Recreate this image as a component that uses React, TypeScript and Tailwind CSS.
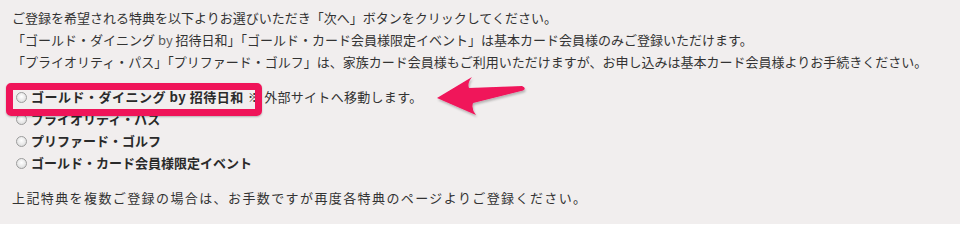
import React from "react";

function Radio() {
  return (
    <span className="inline-block w-[11px] h-[11px] shrink-0 rounded-full border border-[#9c9c9c] bg-[radial-gradient(circle_at_50%_40%,#ffffff_0%,#e6e6e6_60%,#cfcfcf_100%)]" />
  );
}

export default function App() {
  return (
    <div
      className="w-[960px] h-[224px] bg-[#f1eeee] text-[#333333] text-[13px] pl-[12px] pt-[7px] overflow-hidden relative"
      style={{ fontFamily: '"Noto Sans CJK JP", "Noto Sans", sans-serif' }}
    >
      <div className="leading-[22px] whitespace-nowrap">
        <p>ご登録を希望される特典を以下よりお選びいただき「次へ」ボタンをクリックしてください。</p>
        <p>
          「ゴールド・ダイニング <span className="text-[#5a5a5a]">by</span> 招待日和」「ゴールド・カード会員様限定イベント」は基本カード会員様のみご登録いただけます。
        </p>
        <p>「プライオリティ・パス」「プリファード・ゴルフ」は、家族カード会員様もご利用いただけますが、お申し込みは基本カード会員様よりお手続きください。</p>
      </div>

      <div className="relative mt-[13px] leading-[22px] whitespace-nowrap">
        <div className="flex items-center h-[22px] pl-[4px] gap-[4px]">
          <Radio />
          <span className="font-bold text-[#2a2a2a] tracking-[0.5px]">ゴールド・ダイニング by 招待日和</span>
          <span className="tracking-[0.3px]">※ 外部サイトへ移動します。</span>
        </div>
        <div className="flex items-center h-[22px] pl-[4px] gap-[4px]">
          <Radio />
          <span className="font-bold text-[#2a2a2a]">プライオリティ・パス</span>
        </div>
        <div className="flex items-center h-[22px] pl-[4px] gap-[4px]">
          <Radio />
          <span className="font-bold text-[#2a2a2a]">プリファード・ゴルフ</span>
        </div>
        <div className="flex items-center h-[22px] pl-[4px] gap-[4px]">
          <Radio />
          <span className="font-bold text-[#2a2a2a]">ゴールド・カード会員様限定イベント</span>
        </div>

        <div className="absolute top-[-3px] left-[-6px] w-[256px] h-[33px] border-[7px] border-[#ef1459] rounded-[5px] shadow-[0_1px_2px_rgba(0,0,0,0.25)] pointer-events-none" />
      </div>

      <p className="mt-[13px] leading-[22px] whitespace-nowrap tracking-[1.4px]">
        上記特典を複数ご登録の場合は、お手数ですが再度各特典のページよりご登録ください。
      </p>

      <svg
        className="absolute left-0 top-0 pointer-events-none"
        width="960"
        height="224"
        viewBox="0 0 960 224"
      >
        <defs>
          <filter id="sh" x="-20%" y="-30%" width="140%" height="160%">
            <feDropShadow dx="1" dy="2" stdDeviation="1.2" floodColor="#000" floodOpacity="0.25" />
          </filter>
        </defs>
        <path
          d="M437,98 L472,77 Q467,83 469,88 L522,86 Q527,88 523,90.5 L473,103 Q471,109 476,115 Z"
          fill="#f0145a"
          filter="url(#sh)"
        />
      </svg>
    </div>
  );
}
